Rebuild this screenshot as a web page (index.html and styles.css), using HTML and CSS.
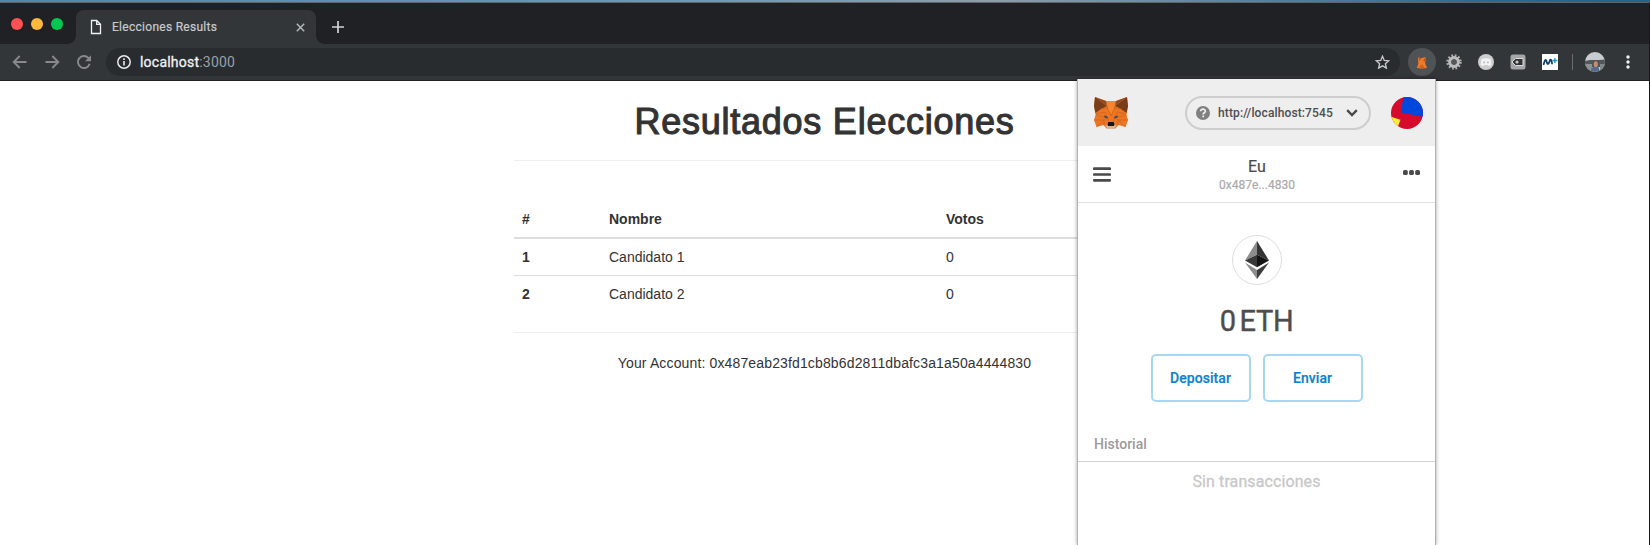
FILE: index.html
```html
<!DOCTYPE html>
<html lang="es">
<head>
<meta charset="utf-8">
<title>Elecciones Results</title>
<link rel="stylesheet" href="styles.css">
</head>
<body>
<div class="desktop"></div>
<div class="window">
  <div class="tabstrip">
    <div class="lights"><i class="light red"></i><i class="light amber"></i><i class="light green"></i></div>
    <div class="tab">
      <svg class="file" width="12" height="16" viewBox="0 0 12 16"><path d="M1.500 1.500h5.200L10.500 5.300v9.200h-9zM6.700 1.500V5.300h3.800" fill="none" stroke="#f0f1f2" stroke-width="1.300"/></svg>
      <span class="tab-title">Elecciones Results</span>
      <svg width="9" height="9" viewBox="0 0 9 9"><path d="M.8.8l7.400 7.400M8.200.8L.8 8.200" stroke="#b4b7ba" stroke-width="1.500"/></svg>
    </div>
    <svg class="plus" width="12" height="12" viewBox="0 0 12 12"><path d="M6 0v12M0 6h12" stroke="#d0d2d4" stroke-width="1.700"/></svg>
  </div>
  <div class="toolbar">
    <svg class="nav" width="15" height="14" viewBox="0 0 15 14"><path d="M14.500 7H1.800M7.700 1L1.700 7l6 6" fill="none" stroke="#87898b" stroke-width="1.900"/></svg>
    <svg class="nav" width="15" height="14" viewBox="0 0 15 14"><path d="M.5 7h12.700M7.300 1l6 6-6 6" fill="none" stroke="#87898b" stroke-width="1.900"/></svg>
    <svg class="nav" width="15" height="14" viewBox="0 0 15 14"><path d="M12.700 8.800A6 6 0 1 1 11.300 2.800L13 4.500" fill="none" stroke="#87898b" stroke-width="1.900"/><path d="M14 .2v6H8z" fill="#87898b"/></svg>
    <div class="omnibox">
      <svg width="14" height="14" viewBox="0 0 14 14"><circle cx="7" cy="7" r="6.200" fill="none" stroke="#e8eaed" stroke-width="1.500"/><path d="M7 6v4.500M7 3.300v1.600" stroke="#e8eaed" stroke-width="1.600"/></svg>
      <span class="url"><strong>localhost</strong>:3000</span>
      <svg class="star" width="15" height="14" viewBox="0 0 24 23"><path d="M12 2l2.900 6.900 7.400.6-5.600 4.900 1.700 7.200L12 17.800l-6.400 3.800 1.700-7.200L1.700 9.500l7.400-.6z" fill="none" stroke="#c8cacc" stroke-width="2.200"/></svg>
    </div>
    <div class="ext active"><svg width="12" height="13" viewBox="0 0 12 13"><path d="M2 1l3 1.200L9.500 1l.5 4-1 2 2 5-5 .6L.8 12l1.500-4z" fill="#f07a26"/><path d="M2 1l3 1.200L4 5zM9.500 1L7 5l3 1z" fill="#b9541d"/><path d="M3 10.500l3-2 3 3.500-4 .3z" fill="#d4601d"/></svg></div>
    <svg class="ext" width="28" height="28" viewBox="-14 -14 28 28"><circle r="6.500" fill="none" stroke="#b0b0b0" stroke-width="2.400" stroke-dasharray="1.700 1.700"/><circle r="4.300" fill="none" stroke="#bdbdbd" stroke-width="3.200"/><circle r="2.500" fill="#55585a"/></svg>
    <svg class="ext" width="28" height="28" viewBox="-14 -14 28 28"><circle r="8" fill="#cdcdcd"/><path d="M-4.500-3Q0-4.500 4.500-3L5.500 3 3 4.300 2 3h-4l-1 1.300L-5.500 3z" fill="#f3f3f3"/><circle cx="-1.900" cy=".4" r="1.100" fill="#c5c5c5"/><circle cx="1.900" cy=".4" r="1.100" fill="#c5c5c5"/></svg>
    <svg class="ext" width="28" height="28" viewBox="-14 -14 28 28"><rect x="-7.500" y="-7.500" width="15" height="15" rx="2.500" fill="#a4a6a7"/><path d="M-6 0l3.500-3.500H5v7h-7.500z" fill="#303234" stroke="#dcdcdc"/><circle cx="-1" r="1.600" fill="#c9c9c9"/></svg>
    <svg class="ext" width="28" height="28" viewBox="-14 -14 28 28"><path d="M-8-8H8V8H-8z" fill="#fff"/><path d="M-6.300 2.200C-5-3-4.200-3-3.300 0S-1.300 2.300-.4-.8 1.600-2 2 1.500" fill="none" stroke="#0b3f67" stroke-width="1.800" stroke-linecap="round"/><path d="M4.900-4V1M2.400-1.500h5" stroke="#1894c8" stroke-width="1.300"/></svg>
    <i class="divider"></i>
    <svg class="avatar" width="20" height="20" viewBox="0 0 20 20"><clipPath id="face"><circle cx="10" cy="10" r="10"/></clipPath><g clip-path="url(#face)"><path d="M0 0h20v20H0z" fill="#c9cdd1"/><path d="M0 9l5-1h9l6-.5V15H0z" fill="#50565a"/><path d="M0 12h7v8H0z" fill="#8d9391"/><path d="M5.500 20l1-4 3-2 4 1 1.500 5z" fill="#566c8c"/><ellipse cx="10.800" cy="12.200" rx="2" ry="2.900" fill="#c58e73"/><path d="M15 12h5v8h-5z" fill="#818987"/></g></svg>
    <svg class="menu" width="4" height="14" viewBox="0 0 4 14"><g fill="#f1f3f4"><circle cx="2" cy="2" r="1.700"/><circle cx="2" cy="7" r="1.700"/><circle cx="2" cy="12" r="1.700"/></g></svg>
  </div>
  <main class="page">
    <h1>Resultados Elecciones</h1>
    <hr>
    <table>
      <thead><tr><th class="num">#</th><th class="name">Nombre</th><th>Votos</th></tr></thead>
      <tbody>
        <tr><th>1</th><td>Candidato 1</td><td>0</td></tr>
        <tr><th>2</th><td>Candidato 2</td><td>0</td></tr>
      </tbody>
    </table>
    <hr>
    <p>Your Account: 0x487eab23fd1cb8b6d2811dbafc3a1a50a4444830</p>
  </main>
</div>

<aside class="wallet">
  <header class="wallet-head">
    <svg class="fox" width="34" height="32" viewBox="0 0 34 32">
      <path d="M1 0l11 4h10L33 0l1 9-1.500 9 1.500 5-2.500 7-7-2-3 3.500h-9l-3-3.500-7 2L0 23l1.500-5L0 9z" fill="#ec7624"/>
      <path d="M1 0l12 9-6 3-5.500 4L0 9zM33 0L21 9l6 3 5.500 4L34 9z" fill="#783d1a"/>
      <path d="M1 0l11 4 1.500 5zM33 0L22 4l-1.500 5z" fill="#964819"/>
      <path d="M12 4h10l-1.500 7L17 17l-3.500-6z" fill="#f5862f"/>
      <path d="M12 4l1.500 7-7 1M22 4l-1.500 7 7 1M2 17l9-2 2 6-11-3M32 17l-9-2-2 6 11-3M0 23h10l-7.500 7M34 23H24l7.500 7M13 10l4 9 4-9M10 23l4-2 1 5M24 23l-4-2-1 5M10 23v5M24 23v5" fill="none" stroke="#c6601d" stroke-width=".6"/>
      <path d="M10 18.500l3.500 1 .5 2-3.500-1zM24 18.500l-3.500 1-.5 2 3.500-1z" fill="#4a4a50"/>
      <path d="M11.500 28.500l2.500-1h6l2.500 1-2 3h-7z" fill="#c9b7a8"/><path d="M14.300 25h5.400l.8 3-.8 1h-5.400l-.8-1z" fill="#171717"/>
    </svg>
    <div class="network">
      <svg width="14" height="14" viewBox="0 0 14 14"><circle cx="7" cy="7" r="7" fill="#808080"/><path d="M4.700 5.300C4.800 2.500 9.300 2.500 9.300 5.200c0 1.700-2.100 1.500-2.100 3.200M7.200 9.500v1.800" fill="none" stroke="#eee" stroke-width="1.700"/></svg>
      <span>http://localhost:7545</span>
      <svg width="12" height="8" viewBox="0 0 12 8"><path d="M1.200 1.200L6 6l4.800-4.800" fill="none" stroke="#4a4a4a" stroke-width="2.400"/></svg>
    </div>
    <svg class="ident" width="32" height="32" viewBox="0 0 32 32"><clipPath id="disc"><circle cx="16" cy="16" r="16"/></clipPath><g clip-path="url(#disc)"><path d="M0 0h32v32H0z" fill="#d60a2b"/><path d="M13-3L9.700 15.500 33 20V-3z" fill="#0048dc"/><path d="M-1 19.500l10.500 3.300L6 32H-2z" fill="#f8ee3a"/></g></svg>
  </header>
  <div class="account-row">
    <svg width="18" height="15" viewBox="0 0 18 15"><path d="M1.200 1.700h15.600M1.200 7.500h15.600M1.200 13.300h15.600" stroke="#4a4a4a" stroke-width="2.700" stroke-linecap="round"/></svg>
    <div class="who"><b>Eu</b><small>0x487e...4830</small></div>
    <svg class="dots" width="17" height="5" viewBox="0 0 17 5"><g fill="#4a4a4a"><rect width="4.800" height="5" rx="1.600"/><rect x="6.100" width="4.800" height="5" rx="1.600"/><rect x="12.200" width="4.800" height="5" rx="1.600"/></g></svg>
  </div>
  <section class="balance">
    <div class="coin"><svg width="24" height="38" viewBox="0 0 24 38"><path d="M12 0L0 19.500l12-5.700z" fill="#8c8c8c"/><path d="M12 0l12 19.500-12-5.700z" fill="#343434"/><path d="M0 19.500l12-5.700v12.500z" fill="#393939"/><path d="M24 19.500l-12-5.700v12.500z" fill="#141414"/><path d="M0 21.500L12 38v-9z" fill="#8c8c8c"/><path d="M24 21.500L12 38v-9z" fill="#3c3c3b"/></svg></div>
    <div class="amount">0 ETH</div>
    <div class="actions"><button>Depositar</button><button>Enviar</button></div>
  </section>
  <div class="history">Historial</div>
  <div class="empty">Sin transacciones</div>
</aside>
</body>
</html>
```
FILE: styles.css
```css
* { box-sizing: border-box; }
body {
  margin: 0;
  height: 545px;
  overflow: hidden;
  background: #fff;
  color: #333;
  font-family: "Liberation Sans", Arial, sans-serif;
}
svg { display: block; flex: none; }
.desktop { height: 2px; background: linear-gradient(90deg, #4e87ad, #6c98b4 40%, #8e9da9 60%, #2b6a92 90%, #1f648f); }
.window { height: 543px; border-top: 1px solid #626568; border-right: 1px solid #17181a; background: linear-gradient(#202124 40px, #fff 40px); }

.tabstrip { height: 41px; display: flex; align-items: center; background: #202124; }
.lights { width: 76px; padding-left: 11px; display: flex; gap: 8px; }
.light { width: 12px; height: 12px; border-radius: 50%; }
.red { background: #ff5052; }
.amber { background: #ffb83e; }
.green { background: #00c951; }
.tab {
  position: relative;
  width: 240px; height: 34px; margin-top: 7px; padding: 0 11px 0 14px;
  display: flex; align-items: center;
  background: #323639; border-radius: 8px 8px 0 0;
}
.tab::before, .tab::after { content: ""; position: absolute; bottom: 0; width: 8px; height: 8px; }
.tab::before { left: -8px; background: radial-gradient(circle at 0 0, transparent 7.5px, #323639 8px); }
.tab::after { right: -8px; background: radial-gradient(circle at 100% 0, transparent 7.5px, #323639 8px); }
.tab-title { flex: 1; margin-left: 10px; font: 12px Roboto, sans-serif; letter-spacing: .28px; color: #c8cbcd; -webkit-text-stroke: .2px; }
.plus { margin: 6px 0 0 16px; }

.toolbar { height: 37px; display: flex; align-items: center; background: #323639; border-bottom: 1px solid #231f23; }
.nav { margin-left: 12px; }
.nav + .nav { margin-left: 18px; }
.nav + .nav + .nav { margin-left: 17px; }
.omnibox {
  flex: 1; height: 28px; margin-left: 14px; padding: 0 10px 0 11px;
  display: flex; align-items: center;
  background: #282c2f; border-radius: 14px;
}
.url { flex: 1; margin-left: 9px; font: 14px Roboto, sans-serif; letter-spacing: .22px; color: #9aa0a6; }
.url strong { font-weight: 400; color: #f1f3f4; -webkit-text-stroke: .3px; }
.ext { width: 28px; height: 28px; margin-left: 4px; flex: none; }
.active { margin-left: 8px; display: flex; align-items: center; justify-content: center; border-radius: 50%; background: #505356; }
.divider { width: 1px; height: 16px; margin-left: 8px; background: #696c6f; }
.avatar { margin-left: 12px; }
.menu { margin: 0 19px 0 21px; }

.page { width: 651px; margin: 0 auto; padding: 0 15px; font-size: 14px; line-height: 20px; }
h1 {
  margin: 0; padding: 21px 0 18px;
  font-size: 36px; line-height: 40px; font-weight: 400;
  letter-spacing: .75px; -webkit-text-stroke: 1.1px #333;
  text-align: center; white-space: nowrap;
}
hr { height: 1px; margin: 0; border: 0; background: #eee; }
table { width: 100%; margin: 40px 0 20px; border-collapse: separate; border-spacing: 0; }
th, td { padding: 8px; text-align: left; }
thead th { border-bottom: 2px solid #ddd; }
tbody tr + tr > * { border-top: 1px solid #ddd; }
.num { width: 87px; }
.name { width: 337px; }
p { margin: 20px 0; text-align: center; letter-spacing: .14px; }

.wallet {
  position: absolute; left: 1077px; top: 79px; width: 359px; height: 466px;
  border: solid #b1b1b1; border-width: 0 1px;
  background: #fff; box-shadow: 0 0 4px rgba(0, 0, 0, .35);
  font-family: Roboto, sans-serif; color: #4d4d4d;
}
.wallet-head { height: 67px; padding: 0 12px 0 16px; display: flex; align-items: center; background: #eee; }
.network {
  width: 186px; height: 34px; margin: 0 20px 0 57px; padding: 0 11px 0 9px;
  display: flex; align-items: center;
  border: 2px solid #cdcdcd; border-radius: 17px;
  font-size: 12px; font-weight: 500; letter-spacing: .12px;
}
.network span { flex: 1; margin-left: 8px; white-space: nowrap; }
.account-row { height: 57px; padding: 0 15px; display: flex; align-items: center; justify-content: space-between; border-bottom: 1px solid #dedede; }
.dots { margin-bottom: 3px; }
.who { padding-top: 2px; display: flex; flex-direction: column; align-items: center; }
.who b { font-size: 16px; line-height: 20px; font-weight: 400; -webkit-text-stroke: .2px; }
.who small { font-size: 12px; line-height: 17px; color: #aaa; -webkit-text-stroke: .2px; }
.balance { height: 199px; padding-top: 32px; display: flex; flex-direction: column; align-items: center; }
.coin { width: 50px; height: 50px; display: flex; align-items: center; justify-content: center; border: 1px solid #dedede; border-radius: 50%; }
.amount { margin-top: 16px; font-size: 29px; line-height: 40px; letter-spacing: -.3px; word-spacing: -3px; -webkit-text-stroke: .4px; }
.actions { display: flex; gap: 12px; margin-top: 13px; }
.actions button { width: 100px; height: 48px; padding: 0; border: 2px solid #a7d8ef; border-radius: 5px; background: #fff; color: #0b83cf; font: 500 14px Roboto, sans-serif; letter-spacing: .05px; -webkit-text-stroke: .2px; }
.history { height: 60px; padding: 32px 16px 0; font-size: 14px; line-height: 20px; font-weight: 500; color: #9b9b9b; border-bottom: 1px solid #d2d2d2; }
.empty { padding-top: 10px; font-size: 16px; line-height: 20px; letter-spacing: .1px; text-align: center; color: #c8c8c8; -webkit-text-stroke: .3px; }
```
